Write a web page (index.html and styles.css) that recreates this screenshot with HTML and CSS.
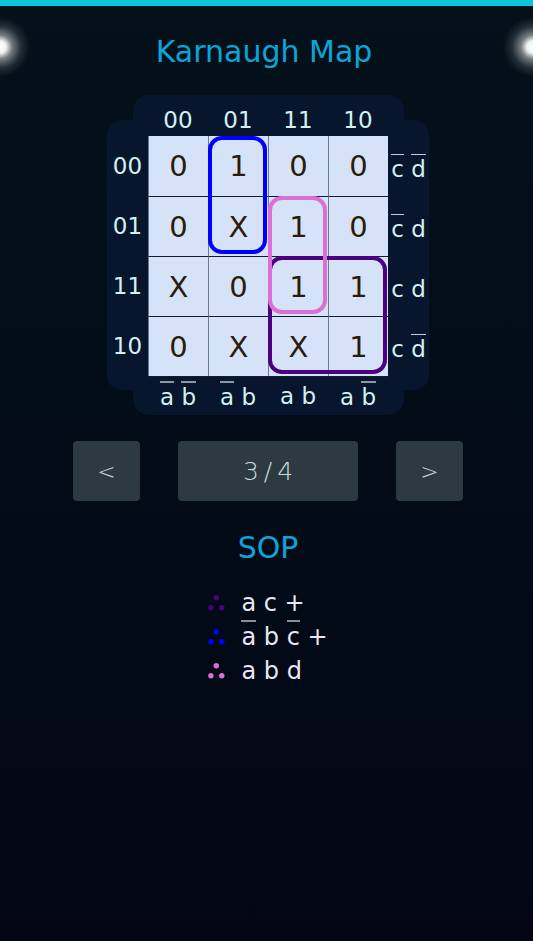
FILE: index.html
```html
<!DOCTYPE html>
<html lang="en">
<head>
<meta charset="utf-8">
<title>Karnaugh Map</title>
<link rel="stylesheet" href="styles.css">
</head>
<body>
<div class="topbar"></div>
<main class="app">
  <h1 class="title">Karnaugh Map</h1>

  <div class="kmap">
    <div class="bg-v"></div>
    <div class="bg-h"></div>

    <div class="colheads">
      <div>00</div><div>01</div><div>11</div><div>10</div>
    </div>

    <div class="rowheads">
      <div>00</div><div>01</div><div>11</div><div>10</div>
    </div>

    <div class="cells">
      <div class="cell">0</div><div class="cell">1</div><div class="cell">0</div><div class="cell">0</div>
      <div class="cell">0</div><div class="cell">X</div><div class="cell">1</div><div class="cell">0</div>
      <div class="cell">X</div><div class="cell">0</div><div class="cell">1</div><div class="cell">1</div>
      <div class="cell">0</div><div class="cell">X</div><div class="cell">X</div><div class="cell">1</div>
    </div>

    <div class="groups">
      <div class="grp grp-purple"></div>
      <div class="grp grp-pink"></div>
      <div class="grp grp-blue"></div>
    </div>

    <div class="rowlabels">
      <div><span class="ov">c</span> <span class="ov">d</span></div>
      <div><span class="ov">c</span> <span>d</span></div>
      <div><span>c</span> <span>d</span></div>
      <div><span>c</span> <span class="ov">d</span></div>
    </div>

    <div class="collabels">
      <div><span class="ov">a</span> <span class="ov">b</span></div>
      <div><span class="ov">a</span> <span>b</span></div>
      <div><span>a</span> <span>b</span></div>
      <div><span>a</span> <span class="ov">b</span></div>
    </div>
  </div>

  <div class="nav">
    <button class="btn" type="button">&lt;</button>
    <div class="page">3 / 4</div>
    <button class="btn" type="button">&gt;</button>
  </div>

  <h2 class="sop-title">SOP</h2>

  <div class="sop">
    <div class="term"><svg class="dots" width="17" height="16" viewBox="0 0 17 16"><g fill="#4b0082"><circle cx="8.3" cy="2.8" r="2.7"/><circle cx="2.9" cy="12.8" r="2.7"/><circle cx="13.8" cy="12.8" r="2.7"/></g></svg><span>a</span> <span>c</span> +</div>
    <div class="term"><svg class="dots" width="17" height="16" viewBox="0 0 17 16"><g fill="#0000ff"><circle cx="8.3" cy="2.8" r="2.7"/><circle cx="2.9" cy="12.8" r="2.7"/><circle cx="13.8" cy="12.8" r="2.7"/></g></svg><span class="ov">a</span> <span>b</span> <span class="ov">c</span> +</div>
    <div class="term"><svg class="dots" width="17" height="16" viewBox="0 0 17 16"><g fill="#da70d6"><circle cx="8.3" cy="2.8" r="2.7"/><circle cx="2.9" cy="12.8" r="2.7"/><circle cx="13.8" cy="12.8" r="2.7"/></g></svg><span>a</span> <span>b</span> <span>d</span></div>
  </div>
</main>
</body>
</html>
```

FILE: styles.css
```css
html {
  min-height: 100%;
  background: linear-gradient(180deg, #04111a 0%, #030c17 50%, #020615 100%);
}

body {
  margin: 0;
  min-height: 941px;
  font-family: "DejaVu Sans", "Liberation Sans", sans-serif;
  background:
    radial-gradient(circle at 0 47px, rgba(255,255,255,1) 0, rgba(255,255,255,0.95) 6px, rgba(255,255,255,0.45) 12px, rgba(255,255,255,0.12) 21px, rgba(255,255,255,0) 30px) no-repeat,
    radial-gradient(circle at 100% 47px, rgba(255,255,255,1) 0, rgba(255,255,255,0.95) 6px, rgba(255,255,255,0.45) 12px, rgba(255,255,255,0.12) 21px, rgba(255,255,255,0) 30px) no-repeat;
}

.topbar {
  height: 6px;
  background: #0cc5dd;
}

.app {
  padding-left: 3px;
  display: flex;
  flex-direction: column;
  align-items: center;
}

.title {
  margin: 0;
  padding: 28px 8px 0 0;
  font-size: 30px;
  line-height: 36px;
  font-weight: normal;
  color: #0ba5d9;
}

/* ---------- K-map ---------- */
.kmap {
  margin-top: 25px;
  display: grid;
  grid-template-columns: 41px 240px 41px;
  grid-template-rows: 41px 240px 39px;
  color: #d3f1f1;
  font-size: 23px;
}

.bg-v {
  grid-column: 2;
  grid-row: 1 / -1;
  margin: 0 -16px 0 -15px;
  border-radius: 16px;
  background: #07162c;
}

.bg-h {
  grid-column: 1 / -1;
  grid-row: 2;
  margin: -16px 0 -14px 0;
  border-radius: 15px;
  background: #07162c;
}

.colheads {
  grid-column: 2;
  grid-row: 1;
  display: grid;
  grid-template-columns: repeat(4, 60px);
  align-items: end;
  text-align: center;
  line-height: 27px;
  padding-bottom: 2px;
}

.rowheads {
  grid-column: 1;
  grid-row: 2;
  display: grid;
  grid-template-rows: repeat(4, 60px);
  align-items: center;
  text-align: center;
  line-height: 27px;
}

.cells {
  grid-column: 2;
  grid-row: 2;
  display: grid;
  grid-template-columns: repeat(4, 60px);
  grid-template-rows: repeat(4, 60px);
  background: #d5e2f8;
  box-shadow: 0 1px 0 #131a28;
}

.cell {
  box-sizing: border-box;
  display: flex;
  align-items: center;
  justify-content: center;
  border-left: 1.5px solid #6b7a8c;
  border-top: 1px solid #131a28;
  font-size: 29px;
  color: #2b1c0a;
}

.cell:nth-child(-n+4) {
  border-top: 0;
}

.groups {
  grid-column: 2;
  grid-row: 2;
  display: grid;
  grid-template-columns: repeat(4, 60px);
  grid-template-rows: repeat(4, 60px);
  pointer-events: none;
}

.grp {
  box-sizing: border-box;
  border: 4px solid;
  border-radius: 14px;
  margin: 0 1px 2px 0;
}

.grp-blue {
  grid-column: 2;
  grid-row: 1 / 3;
  border-color: #0000ff;
}

.grp-pink {
  grid-column: 3;
  grid-row: 2 / 4;
  border-color: #da70d6;
}

.grp-purple {
  grid-column: 3 / 5;
  grid-row: 3 / 5;
  border-color: #4b0082;
}

.rowlabels {
  grid-column: 3;
  grid-row: 2;
  display: grid;
  grid-template-rows: repeat(4, 60px);
  align-items: center;
  text-align: center;
  line-height: 27px;
  white-space: nowrap;
}

.rowlabels > div {
  padding-top: 6px;
}

.collabels {
  grid-column: 2;
  grid-row: 3;
  display: grid;
  grid-template-columns: repeat(4, 60px);
  align-items: center;
  text-align: center;
  padding-top: 2px;
  line-height: 27px;
  white-space: nowrap;
}

.ov {
  display: inline-block;
  line-height: 1.3;
  border-top: 2px solid #8b99a0;
}

.rowlabels .ov {
  border-top: 1.5px solid #c3cdd1;
}

/* ---------- navigation ---------- */
.nav {
  margin-top: 26px;
  display: flex;
  gap: 38px;
}

.btn,
.page {
  height: 60px;
  border: 0;
  border-radius: 4px;
  background: #2d3a42;
  color: #c4dcde;
  font-family: "DejaVu Sans", "Liberation Sans", sans-serif;
  font-weight: 200;
  display: flex;
  align-items: center;
  justify-content: center;
  padding: 0;
}

.btn {
  width: 67px;
  font-size: 22px;
}

.page {
  width: 180px;
  font-size: 25px;
  word-spacing: -3px;
}

/* ---------- SOP ---------- */
.sop-title {
  margin: 29px 0 0;
  font-size: 30px;
  line-height: 36px;
  font-weight: normal;
  color: #0ba5d9;
}

.sop {
  margin-top: 21px;
  display: flex;
  flex-direction: column;
  font-size: 24px;
  line-height: 33.3px;
  color: #e9e7f3;
  white-space: nowrap;
}

.sop .ov {
  border-top-color: #8a9196;
}

.dots {
  margin-right: 16px;
  vertical-align: 0;
}
```
